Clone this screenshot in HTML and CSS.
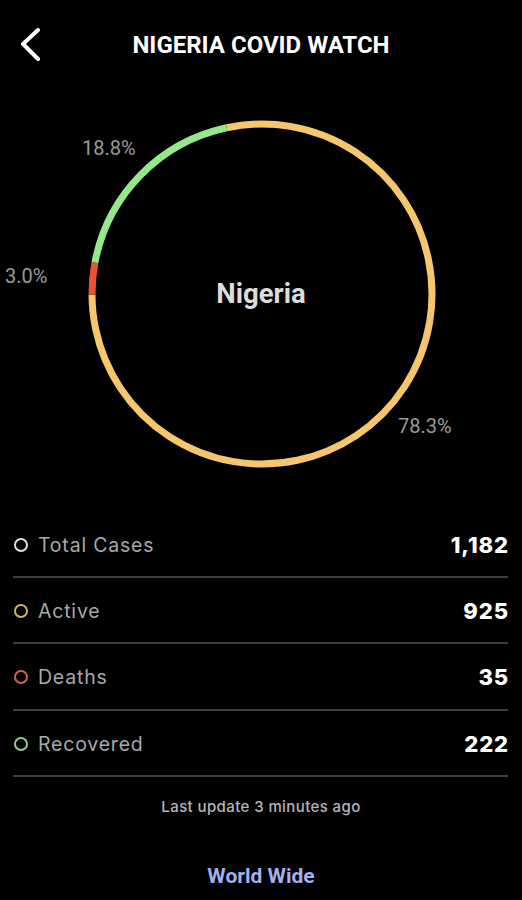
FILE: index.html
```html
<!DOCTYPE html>
<html>
<head>
<meta charset="utf-8">
<link rel="stylesheet" href="styles.css">
</head>
<body>
<div class="app">
  <header class="topbar">
    <svg class="back" width="24" height="34" viewBox="0 0 24 34"><polyline points="19,2 4,16 19,31" fill="none" stroke="#fff" stroke-width="4" stroke-linecap="round" stroke-linejoin="round"/></svg>
    <h1 class="title">NIGERIA COVID WATCH</h1>
  </header>
  <section class="chart">
    <svg width="522" height="422" viewBox="0 0 522 422">
      <g transform="rotate(258 262 204)" fill="none" stroke-width="7">
        <circle cx="262" cy="204" r="170" pathLength="100" stroke="#f5c66b" stroke-dasharray="78.3 21.7"/>
        <circle cx="262" cy="204" r="170" pathLength="100" stroke="#e9532e" stroke-dasharray="3 97" stroke-dashoffset="-78.3"/>
        <circle cx="262" cy="204" r="170" pathLength="100" stroke="#93e98a" stroke-dasharray="18.7 81.3" stroke-dashoffset="-81.3"/>
      </g>
      <text class="pct" x="82" y="65">18.8%</text>
      <text class="pct" x="5" y="193">3.0%</text>
      <text class="pct" x="398" y="343">78.3%</text>
      <text class="center" x="261" y="213" text-anchor="middle">Nigeria</text>
    </svg>
  </section>
  <ul class="stats">
    <li class="row"><span class="label"><i class="dot dot-total"></i>Total Cases</span><span class="num">1,182</span></li>
    <li class="row"><span class="label"><i class="dot dot-active"></i>Active</span><span class="num">925</span></li>
    <li class="row"><span class="label"><i class="dot dot-deaths"></i>Deaths</span><span class="num">35</span></li>
    <li class="row"><span class="label"><i class="dot dot-recovered"></i>Recovered</span><span class="num">222</span></li>
  </ul>
  <p class="updated">Last update 3 minutes ago</p>
  <p class="world">World Wide</p>
</div>
</body>
</html>
```

FILE: styles.css
```css
html, body {
  margin: 0;
  padding: 0;
  background: #000;
}
body {
  font-family: Roboto, "Liberation Sans", sans-serif;
  color: #fff;
  width: 522px;
  height: 900px;
  overflow: hidden;
}
.topbar {
  position: relative;
  height: 90px;
  display: flex;
  align-items: center;
  justify-content: center;
}
.back {
  position: absolute;
  left: 19px;
  top: 28px;
}
.title {
  margin: 0;
  font-size: 24px;
  font-weight: 700;
  color: #fff;
}
.chart {
  height: 422px;
}
.chart svg {
  display: block;
}
.pct {
  font-family: Roboto, sans-serif;
  font-size: 20px;
  fill: #9a9a9a;
}
.center {
  font-family: Roboto, sans-serif;
  font-size: 27.5px;
  font-weight: 700;
  fill: #dcdcdc;
}
.stats {
  list-style: none;
  margin: 0 14px 0 13px;
  padding: 0;
}
.row {
  height: 62px;
  padding-top: 2px;
  border-bottom: 2px solid #3d3d3d;
  display: flex;
  align-items: center;
  justify-content: space-between;
}
.row:nth-child(n+3) {
  height: 62.5px;
}
.label {
  display: flex;
  align-items: center;
  font-family: Inter, sans-serif;
  font-size: 19.5px;
  letter-spacing: 0.8px;
  color: #a8a8a8;
}
.dot {
  display: inline-block;
  width: 10px;
  height: 10px;
  border: 2px solid #ddd;
  border-radius: 50%;
  margin: 0 10px 0 1px;
}
.dot-total { border-color: #dedede; }
.dot-active { border-color: #cfb26c; }
.dot-deaths { border-color: #d9604a; }
.dot-recovered { border-color: #8fcf8a; }
.num {
  font-family: Inter, sans-serif;
  font-weight: 800;
  font-size: 22px;
  letter-spacing: 0.9px;
  margin-right: -1px;
  color: #fff;
}
.updated {
  margin: 20px 0 0;
  text-align: center;
  font-family: Inter, sans-serif;
  font-size: 15px;
  font-weight: 500;
  letter-spacing: 0.4px;
  color: #b5b5b5;
}
.world {
  margin: 48px 0 0;
  text-align: center;
  font-family: Roboto, sans-serif;
  font-size: 21px;
  font-weight: 700;
  color: #a3aff0;
}
```
